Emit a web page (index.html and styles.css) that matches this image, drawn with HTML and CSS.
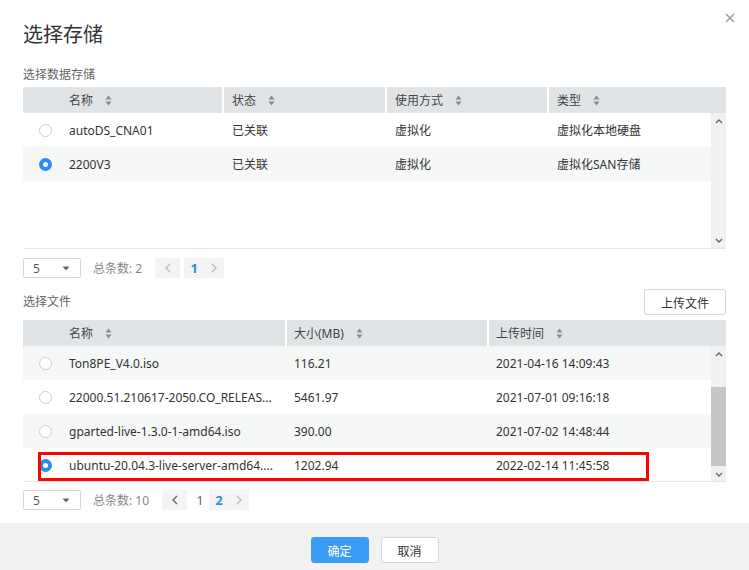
FILE: index.html
```html
<!DOCTYPE html>
<html lang="zh-CN">
<head>
<meta charset="utf-8">
<title>选择存储</title>
<link rel="stylesheet" href="styles.css">
</head>
<body>
<div class="dialog">
  <div class="dlg-head">
    <h1 class="title">选择存储</h1>
    <button class="close" aria-label="关闭">
      <svg width="10" height="10" viewBox="0 0 10 10"><path d="M1 1 L9 9 M9 1 L1 9" stroke="#9a9a9a" stroke-width="1.4" fill="none"/></svg>
    </button>
  </div>

  <div class="section-label">选择数据存储</div>
  <div class="table t1">
    <div class="thead">
      <div class="th first">名称<svg class="sort" width="7" height="11" viewBox="0 0 7 11"><path d="M0.5 4.5 L3.5 0.5 L6.5 4.5 Z M0.5 6.5 L3.5 10.5 L6.5 6.5 Z" fill="#8a8a8a"/></svg></div>
      <div class="th">状态<svg class="sort" width="7" height="11" viewBox="0 0 7 11"><path d="M0.5 4.5 L3.5 0.5 L6.5 4.5 Z M0.5 6.5 L3.5 10.5 L6.5 6.5 Z" fill="#8a8a8a"/></svg></div>
      <div class="th">使用方式<svg class="sort" width="7" height="11" viewBox="0 0 7 11"><path d="M0.5 4.5 L3.5 0.5 L6.5 4.5 Z M0.5 6.5 L3.5 10.5 L6.5 6.5 Z" fill="#8a8a8a"/></svg></div>
      <div class="th">类型<svg class="sort" width="7" height="11" viewBox="0 0 7 11"><path d="M0.5 4.5 L3.5 0.5 L6.5 4.5 Z M0.5 6.5 L3.5 10.5 L6.5 6.5 Z" fill="#8a8a8a"/></svg></div>
    </div>
    <div class="tbody">
      <div class="rows">
        <div class="tr">
          <div class="td first"><span class="radio"></span><span class="txt">autoDS_CNA01</span></div>
          <div class="td">已关联</div>
          <div class="td">虚拟化</div>
          <div class="td">虚拟化本地硬盘</div>
        </div>
        <div class="tr alt">
          <div class="td first"><span class="radio checked"></span><span class="txt">2200V3</span></div>
          <div class="td">已关联</div>
          <div class="td">虚拟化</div>
          <div class="td">虚拟化SAN存储</div>
        </div>
      </div>
      <div class="vscroll">
        <div class="arrow"><svg width="8" height="5" viewBox="0 0 8 5"><path d="M1 4 L4 1 L7 4" stroke="#666" stroke-width="1.4" fill="none"/></svg></div>
        <div class="track"></div>
        <div class="arrow"><svg width="8" height="5" viewBox="0 0 8 5"><path d="M1 1 L4 4 L7 1" stroke="#666" stroke-width="1.4" fill="none"/></svg></div>
      </div>
    </div>
  </div>

  <div class="pager">
    <div class="size-select"><span>5</span><svg width="8" height="5" viewBox="0 0 8 5"><path d="M0.5 0.5 L7.5 0.5 L4 4.5 Z" fill="#666"/></svg></div>
    <span class="total">总条数: 2</span>
    <div class="nav">
      <span class="pg-btn prev disabled"><svg width="6" height="10" viewBox="0 0 6 10"><path d="M5 1 L1 5 L5 9" stroke="currentColor" stroke-width="1.4" fill="none"/></svg></span>
      <span class="pg-num active">1</span>
      <span class="pg-btn next disabled"><svg width="6" height="10" viewBox="0 0 6 10"><path d="M1 1 L5 5 L1 9" stroke="currentColor" stroke-width="1.4" fill="none"/></svg></span>
    </div>
  </div>

  <div class="files-bar">
    <span class="section-label">选择文件</span>
    <button class="btn upload">上传文件</button>
  </div>
  <div class="table t2">
    <div class="thead">
      <div class="th first">名称<svg class="sort" width="7" height="11" viewBox="0 0 7 11"><path d="M0.5 4.5 L3.5 0.5 L6.5 4.5 Z M0.5 6.5 L3.5 10.5 L6.5 6.5 Z" fill="#8a8a8a"/></svg></div>
      <div class="th">大小(MB)<svg class="sort" width="7" height="11" viewBox="0 0 7 11"><path d="M0.5 4.5 L3.5 0.5 L6.5 4.5 Z M0.5 6.5 L3.5 10.5 L6.5 6.5 Z" fill="#8a8a8a"/></svg></div>
      <div class="th">上传时间<svg class="sort" width="7" height="11" viewBox="0 0 7 11"><path d="M0.5 4.5 L3.5 0.5 L6.5 4.5 Z M0.5 6.5 L3.5 10.5 L6.5 6.5 Z" fill="#8a8a8a"/></svg></div>
    </div>
    <div class="tbody">
      <div class="rows">
        <div class="tr alt">
          <div class="td first"><span class="radio"></span><span class="txt">Ton8PE_V4.0.iso</span></div>
          <div class="td">116.21</div>
          <div class="td">2021-04-16 14:09:43</div>
        </div>
        <div class="tr">
          <div class="td first"><span class="radio"></span><span class="txt">22000.51.210617-2050.CO_RELEAS...</span></div>
          <div class="td">5461.97</div>
          <div class="td">2021-07-01 09:16:18</div>
        </div>
        <div class="tr alt">
          <div class="td first"><span class="radio"></span><span class="txt">gparted-live-1.3.0-1-amd64.iso</span></div>
          <div class="td">390.00</div>
          <div class="td">2021-07-02 14:48:44</div>
        </div>
        <div class="tr marked">
          <div class="td first"><span class="radio checked"></span><span class="txt">ubuntu-20.04.3-live-server-amd64....</span></div>
          <div class="td">1202.94</div>
          <div class="td">2022-02-14 11:45:58</div>
          <div class="highlight"></div>
        </div>
      </div>
      <div class="vscroll">
        <div class="arrow"><svg width="8" height="5" viewBox="0 0 8 5"><path d="M1 4 L4 1 L7 4" stroke="#666" stroke-width="1.4" fill="none"/></svg></div>
        <div class="track"><div class="thumb"></div></div>
        <div class="arrow"><svg width="8" height="5" viewBox="0 0 8 5"><path d="M1 1 L4 4 L7 1" stroke="#666" stroke-width="1.4" fill="none"/></svg></div>
      </div>
    </div>
  </div>

  <div class="pager p2">
    <div class="size-select"><span>5</span><svg width="8" height="5" viewBox="0 0 8 5"><path d="M0.5 0.5 L7.5 0.5 L4 4.5 Z" fill="#666"/></svg></div>
    <span class="total">总条数: 10</span>
    <div class="nav">
      <span class="pg-btn prev"><svg width="6" height="10" viewBox="0 0 6 10"><path d="M5 1 L1 5 L5 9" stroke="currentColor" stroke-width="1.4" fill="none"/></svg></span>
      <span class="pg-num">1</span>
      <span class="pg-num active">2</span>
      <span class="pg-btn next disabled"><svg width="6" height="10" viewBox="0 0 6 10"><path d="M1 1 L5 5 L1 9" stroke="currentColor" stroke-width="1.4" fill="none"/></svg></span>
    </div>
  </div>
</div>
<div class="footer">
  <button class="btn primary">确定</button>
  <button class="btn">取消</button>
</div>
</body>
</html>
```
FILE: styles.css
```css
* { box-sizing: border-box; }
html, body { margin: 0; padding: 0; }
body {
  width: 749px;
  height: 570px;
  overflow: hidden;
  background: #fff;
  font-family: "Noto Sans", "Noto Sans CJK SC", sans-serif;
  font-size: 12px;
  color: #333;
}
.dialog {
  padding: 0 23px;
}
.dlg-head {
  display: flex;
  justify-content: space-between;
  align-items: flex-start;
  padding-top: 20px;
}
.title {
  margin: 0;
  font-family: "Noto Sans CJK SC", sans-serif;
  font-weight: 400;
  font-size: 20px;
  line-height: 28px;
  color: #333;
}
.close {
  margin: -7px -9px 0 0;
  padding: 0;
  border: 0;
  background: none;
  width: 10px;
  height: 10px;
  display: flex;
}
.section-label {
  margin-top: 19px;
  line-height: 16px;
  font-size: 12px;
  color: #666;
}
.table { margin-top: 4px; }
.t2 { margin-top: 5px; }
.thead {
  display: grid;
  column-gap: 2px;
  height: 26px;
}
.t1 .thead, .t1 .tr { grid-template-columns: 199px 161px 160px 1fr; }
.t2 .thead, .t2 .tr { grid-template-columns: 262px 200px 1fr; }
.th {
  background: #e1e4e6;
  display: flex;
  align-items: center;
  padding-left: 8px;
  color: #444;
  white-space: nowrap;
}
.t2 .th { padding-left: 7px; }
.th.first { padding-left: 46px; }
.t2 .th.first { padding-left: 46px; }
.sort { margin-left: 12px; flex: none; }
.tbody {
  display: flex;
  height: 136px;
  border-bottom: 1px solid #e6e6e6;
}
.rows {
  flex: 1;
  overflow: hidden;
  min-width: 0;
}
.tr {
  display: grid;
  column-gap: 2px;
  height: 34px;
  position: relative;
}
.tr.alt { background: #f6f7f7; }
.td {
  display: flex;
  align-items: center;
  padding-left: 8px;
  white-space: nowrap;
  overflow: hidden;
  color: #333;
}
.t2 .td { padding-left: 7px; }
.td.first, .t2 .td.first { padding-left: 16px; }
.txt {
  overflow: hidden;
  text-overflow: ellipsis;
  white-space: nowrap;
  padding-right: 6px;
}
.radio {
  flex: none;
  width: 13px;
  height: 13px;
  border-radius: 50%;
  border: 1px solid #cfcfcf;
  background: #fff;
  margin-right: 17px;
}
.radio.checked {
  border: 4px solid #2b8cf2;
}
.highlight {
  position: absolute;
  left: 15px;
  top: 4px;
  width: 611px;
  height: 29px;
  border: 3px solid #f00;
  pointer-events: none;
}
.vscroll {
  width: 15px;
  flex: none;
  background: #f1f1f1;
  display: flex;
  flex-direction: column;
}
.arrow {
  height: 16px;
  display: flex;
  align-items: center;
  justify-content: center;
  flex: none;
}
.track { flex: 1; }
.thumb {
  margin-top: 25px;
  height: 79px;
  background: #c6c6c6;
}
.pager {
  display: flex;
  align-items: center;
  height: 20px;
  margin-top: 9px;
}
.pager.p2 { margin-top: 8px; }
.size-select {
  width: 58px;
  height: 20px;
  border: 1px solid #d6d6d6;
  border-radius: 2px;
  display: flex;
  align-items: center;
  justify-content: space-between;
  padding: 0 10px 0 9px;
  color: #555;
}
.total {
  margin-left: 12px;
  color: #888;
}
.nav {
  display: flex;
  align-items: center;
  margin-left: 13px;
}
.pg-btn {
  height: 20px;
  display: flex;
  align-items: center;
  justify-content: center;
  background: #f4f4f4;
  color: #666;
}
.pg-btn.prev { width: 25px; margin-right: 4px; }
.pg-btn.next { width: 20px; }
.pg-btn.disabled { color: #bdbdbd; }
.pg-num {
  height: 20px;
  width: 18px;
  display: flex;
  align-items: center;
  justify-content: center;
  color: #666;
  font-size: 13px;
}
.pg-num.active {
  background: #f4f4f4;
  color: #2b8cf2;
  font-weight: 700;
  width: 20px;
}
.files-bar {
  display: flex;
  justify-content: space-between;
  align-items: center;
  height: 26px;
  margin-top: 11px;
}
.files-bar .section-label { margin-top: 0; }
.btn {
  font-family: "Noto Sans CJK SC", sans-serif;
  font-size: 12px;
  height: 26px;
  padding: 0;
  border: 1px solid #d6d6d6;
  border-radius: 3px;
  background: #fff;
  color: #333;
}
.upload { width: 82px; }
.footer {
  margin-top: 13px;
  height: 47px;
  background: #f2f2f2;
  display: flex;
  justify-content: center;
  align-items: flex-start;
  gap: 12px;
  padding-top: 14px;
}
.footer .btn { width: 58px; }
.btn.primary {
  background: #3a9cf3;
  border-color: #3a9cf3;
  color: #fff;
}
```
